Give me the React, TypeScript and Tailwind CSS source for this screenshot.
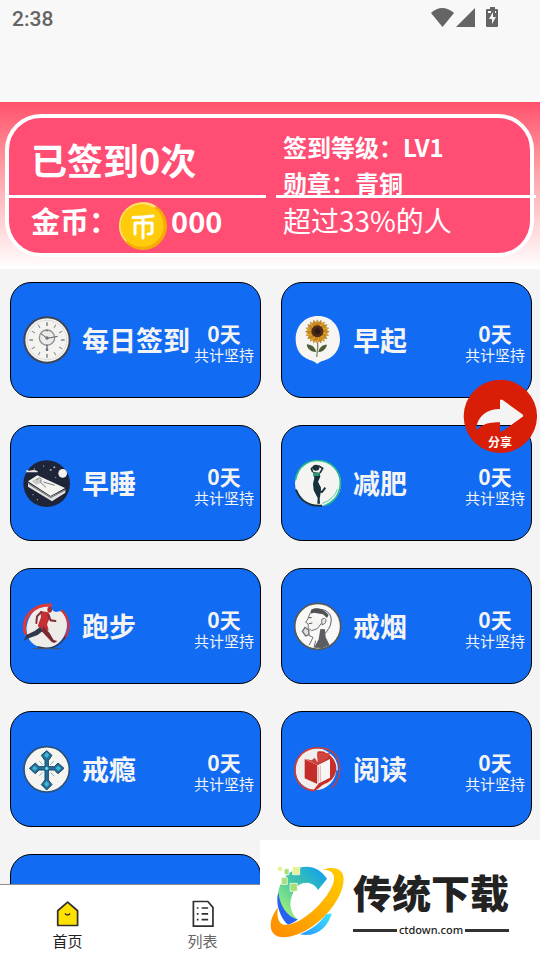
import type { ReactNode } from "react";

const ClockIcon = () => (
  <svg viewBox="68 123 144 144" className="size-12 shrink-0" aria-hidden="true">
    <circle cx="140" cy="195" r="68" fill="#f4f3f0" stroke="#3d4656" strokeWidth="6" />
    <circle cx="140" cy="195" r="59" fill="none" stroke="#cfcfcd" strokeWidth="2" />
    {[0, 30, 60, 90, 120, 150, 180, 210, 240, 270, 300, 330].map((a) => (
      <path key={a} d="M140 142v11" stroke="#8b8f96" strokeWidth={a % 90 === 0 ? 5 : 3} transform={`rotate(${a} 140 195)`} />
    ))}
    <circle cx="140" cy="188" r="23" fill="#ecebe8" stroke="#8f939a" strokeWidth="4" />
    <path d="M122 176l18 14 32-6" fill="none" stroke="#5d636e" strokeWidth="3" />
    <path d="M140 162l-4 7h8zM138 208h4v20h-4z" fill="#6a6f79" />
    <circle cx="140" cy="224" r="4" fill="#6a6f79" />
    <circle cx="140" cy="189" r="5" fill="#6a6f79" />
  </svg>
);

const petals = Array.from({ length: 20 }, (_, i) => i * 18);

const SunflowerIcon = () => (
  <svg viewBox="72 123 144 144" className="size-12 shrink-0" aria-hidden="true">
    <path d="M144 123c40 0 66 30 66 70 0 30-18 55-46 63-10 3-16 6-22 11-6-6-12-9-23-12-27-9-42-32-42-62 0-40 27-70 67-70z" fill="#f6f5f2" />
    <path d="M142 198c3 18 1 30-2 48" fill="none" stroke="#7f8b62" strokeWidth="4" />
    {petals.map((a) => (
      <path key={a} d="M142 170l-7-22 7-14 7 14z" fill={a % 36 === 0 ? "#e9a521" : "#d18a1c"} stroke="#8a5a18" strokeWidth="1" transform={`rotate(${a} 142 170)`} />
    ))}
    <circle cx="142" cy="169" r="18" fill="#4a2b1c" />
    <circle cx="142" cy="169" r="9" fill="#2f1b14" />
    <path d="M139 231c-17 0-27-9-29-23 15 1 25 8 29 23zM145 231c13 0 23-9 26-22-14 0-23 8-26 22z" fill="#4c5f35" />
  </svg>
);

const SleepIcon = () => (
  <svg viewBox="69 117 144 144" className="size-12 shrink-0" aria-hidden="true">
    <circle cx="140" cy="191" r="70" fill="#1e2538" />
    <circle cx="188" cy="160" r="13" fill="#f3f2ee" />
    <path d="M80 150q8 4 15 1t18 3v3H78z" fill="#e8e8e4" />
    <g fill="#a9acb3">
      <circle cx="152" cy="150" r="3" /><circle cx="163" cy="142" r="3" /><circle cx="131" cy="138" r="2" />
      <circle cx="103" cy="147" r="2" /><circle cx="187" cy="221" r="2" /><circle cx="99" cy="224" r="2" />
      <circle cx="167" cy="172" r="2" /><circle cx="112" cy="239" r="2" />
    </g>
    <path d="M84 188l68 42 44-22v10l-40 26-72-44z" fill="#e4e3df" />
    <path d="M84 184l28-18 83 38-43 24z" fill="#f4f3ef" />
    <path d="M95 184l16-10 13 6-4 10-10 4z" fill="#c9c9c6" />
    <path d="M110 180c4-7 11-8 14-2l-2 10 16 14M130 186l34 10" fill="none" stroke="#3a3f50" strokeWidth="2" />
    <path d="M86 192l66 41 44-23" fill="none" stroke="#2c2f3b" strokeWidth="2" />
  </svg>
);

const SlimIcon = () => (
  <svg viewBox="72 27 144 144" className="size-12 shrink-0" aria-hidden="true">
    <circle cx="144" cy="100" r="69" fill="#f4f5f3" />
    <path d="M76 91C84 45 119 26 158 33c37 8 58 43 52 78-4 28-23 48-46 56" fill="none" stroke="#25b98a" strokeWidth="5" />
    <path d="M78 119c13 35 42 51 78 48" fill="none" stroke="#17313a" strokeWidth="6" />
    <path d="M157 160c24-8 39-24 45-42" fill="none" stroke="#50c9a5" strokeWidth="3" />
    <path d="M128 66l-4-10 9-8M145 47l13 8-8 14" fill="none" stroke="#1d3038" strokeWidth="5" />
    <ellipse cx="138" cy="53" rx="10" ry="9" fill="#1d3038" />
    <path d="M128 66l21 2 2 12-7 15 9 18-1 15-3 18 1 15h-8l1-17-12-23-2-20 4-17z" fill="#17313a" />
    <path d="M129 68l19 1 1 8-19 2z" fill="#279b76" />
    <path d="M146 124l10 2 10-13" fill="none" stroke="#17313a" strokeWidth="6" />
  </svg>
);

const RunIcon = () => (
  <svg viewBox="69 126 144 144" className="size-12 shrink-0" aria-hidden="true">
    <path d="M140 138c15 2 14 16 28 18 14-4 18-2 22 3 29 42-5 104-51 105-44 0-66-35-58-70 7-33 28-55 59-56z" fill="#eeece8" />
    <path d="M77 224c-14-46 16-92 79-89" fill="none" stroke="#df3838" strokeWidth="9" />
    <path d="M184 150c26 26 29 59 7 88" fill="none" stroke="#d83235" strokeWidth="7" />
    <path d="M196 230c-16 29-48 42-83 30" fill="none" stroke="#31394a" strokeWidth="4" />
    <ellipse cx="149" cy="149" rx="7" ry="9" fill="#a72d32" />
    <path d="M121 153l24 4 6 13-10 23 5 18-13 4-20-17 10-27z" fill="#c63034" />
    <path d="M124 156l-13 13-2 20M145 165l7 16 14 2" fill="none" stroke="#7d2c38" strokeWidth="6" strokeLinecap="round" />
    <path d="M120 201l-16 12-24 11-10 20 10-7 33-12 16-13z" fill="#30384a" />
    <path d="M130 198l18 20 13 22 11 3-9 6-8-3-30-32z" fill="#7d2934" />
    <path d="M100 266h83" stroke="#4b5361" strokeWidth="3" />
  </svg>
);

const SmokeIcon = () => (
  <svg viewBox="72 126 144 144" className="size-12 shrink-0" aria-hidden="true">
    <circle cx="143" cy="199" r="69" fill="#f9f9f8" stroke="#555759" strokeWidth="5" />
    <path d="M121 158c10-17 57-14 62 15 3 23-8 34-17 47" fill="none" stroke="#55575a" strokeWidth="3" />
    <path d="M123 150c12-11 39-4 53 15l-5 9-12-11-27-5-10 3z" fill="#505255" />
    <path d="M120 160l-6 16-7 11 7 4 1 14 10 7 17-6 12-16" fill="#f5f5f3" stroke="#707274" strokeWidth="3" />
    <path d="M115 173h10M117 191l10-2" stroke="#505255" strokeWidth="3" />
    <path d="M155 178c10-7 17 1 10 12l-9 5z" fill="#e9e9e7" stroke="#6d6f71" strokeWidth="3" />
    <path d="M151 207l14 1 2 24 12 24-21 8-26-1 14-25z" fill="#5b5d60" />
    <path d="M97 214l8-12 11 8 1 14-10 4z" fill="#dededc" stroke="#6b6d70" strokeWidth="4" />
    <path d="M117 226l12 6-12 24M137 242l-5 20" fill="none" stroke="#6b6d70" strokeWidth="3" />
  </svg>
);

const CrossIcon = () => (
  <svg viewBox="69 135 144 144" className="size-12 shrink-0" aria-hidden="true">
    <circle cx="140" cy="208" r="68" fill="#f5f4f1" stroke="#2b527a" strokeWidth="5" />
    <path d="M118 184l10 10M161 184l-10 10M118 227l10-10M162 228l-10-10" stroke="#65bfd0" strokeWidth="3" />
    <path d="M140 152l16 14-11 16v18h18l11-11 18 16-18 16-11-11h-18v30l11 14-16 16-16-16 11-14v-30h-18l-11 11-18-16 18-16 11 11h18v-18l-11-16z" fill="#216f9b" stroke="#194666" strokeWidth="3" />
    <path d="M140 157l8 9-8 8-8-8zM104 197l8 8-8 8-8-8zM175 197l8 8-8 8-8-8zM140 243l8 9-8 9-8-9z" fill="#43b5d3" />
    <circle cx="140" cy="205" r="5" fill="#65d7e4" />
  </svg>
);

const BookIcon = () => (
  <svg viewBox="72 135 144 144" className="size-12 shrink-0" aria-hidden="true">
    <ellipse cx="137" cy="207" rx="62" ry="63" fill="#f1efed" />
    <path d="M142 155c29-6 54 15 57 45 1 25-13 44-34 51-16 7-20 20-36 21l16-20z" fill="#c82e2b" />
    <path d="M135 272c-34 0-60-25-60-62 0-39 30-69 73-66" fill="none" stroke="#d33b35" strokeWidth="5" />
    <path d="M148 144c30 0 50 16 58 40 9 28 0 60-20 79" fill="none" stroke="#d33b35" strokeWidth="4" />
    <path d="M165 155c26 12 38 32 36 56" fill="none" stroke="#f1efed" strokeWidth="4" />
    <path d="M142 158c-3 16 6 18 1 30l29-12 9-16z" fill="#d2443e" />
    <path d="M104 177l38 19v56l-38-17z" fill="#c52d2b" />
    <path d="M142 196l38-19v56l-38 19z" fill="#f7f6f4" />
    <path d="M107 177l18 4 9-8 8 13 17-10 10 4-27 16z" fill="#c9423c" />
    <path d="M145 199v49M151 196v49" stroke="#d98a85" strokeWidth="2" />
  </svg>
);

const habits: { name: string; icon: ReactNode }[] = [
  { name: "每日签到", icon: <ClockIcon /> },
  { name: "早起", icon: <SunflowerIcon /> },
  { name: "早睡", icon: <SleepIcon /> },
  { name: "减肥", icon: <SlimIcon /> },
  { name: "跑步", icon: <RunIcon /> },
  { name: "戒烟", icon: <SmokeIcon /> },
  { name: "戒瘾", icon: <CrossIcon /> },
  { name: "阅读", icon: <BookIcon /> },
];

function HabitCard({ name, icon }: { name: string; icon: ReactNode }) {
  return (
    <button type="button" className="flex h-[116px] items-center rounded-[21px] border border-black bg-[#116bf3] pl-3 pr-[6px] text-left text-[#f4f4f4]">
      {icon}
      <span className="ml-[11px] flex-1 whitespace-nowrap text-[27px] font-bold leading-9">{name}</span>
      <span className="flex flex-col items-center pt-2 leading-[22px]">
        <span className="text-[21px] font-bold">0天</span>
        <span className="text-[15px]">共计坚持</span>
      </span>
    </button>
  );
}

function StatusBar() {
  return (
    <header className="flex h-[102px] shrink-0 items-start justify-between bg-[#f8f8f8] pl-3 pr-[41px] pt-[7px] text-[#646464]">
      <span className="font-[Roboto,sans-serif] text-[21px] font-medium leading-6">2:38</span>
      <svg viewBox="0 0 68 22" className="h-[22px] w-[68px]" fill="currentColor" aria-hidden="true">
        <path d="M0 6Q11-4 23 6L11.500 20z" />
        <path d="M44 1v19H25z" />
        <path fillRule="evenodd" d="M59 0h5v2h2q1 0 1 1v16q0 1-1 1H56q-1 0-1-1V3q0-1 1-1h3zM62 5l-4 7h3v5l4-7h-3zM57 4v2h3V4zM64 4v2h1V4z" />
      </svg>
    </header>
  );
}

function Coin() {
  return (
    <svg viewBox="0 0 50 50" className="mt-[3px] size-[50px] shrink-0" aria-hidden="true">
      <circle cx="25" cy="25" r="24" fill="#f7ac05" />
      <path d="M1 25A24 24 0 0 1 38 5L8 41Q1 34 1 25z" fill="#ffe083" />
      <circle cx="24" cy="24.500" r="21.500" fill="#ffcc0c" />
      <path d="M15 16.500q10 0 20-1.500M17 33V22h17v9q0 2-4 2M25 17v20" fill="none" stroke="#fff" strokeWidth="3" strokeLinecap="round" strokeLinejoin="round" />
    </svg>
  );
}

function Summary() {
  return (
    <section className="shrink-0 bg-linear-to-b from-[#ff4f6c] to-white pb-3 pl-[5px] pr-[6px] pt-3">
      <div className="grid h-[143px] grid-cols-[257fr_254fr] gap-x-[10px] rounded-[36px] border-4 border-white bg-[#ff4d74] font-bold text-white">
        <div>
          <div className="flex h-20 items-center border-b-[3px] border-white pl-[22px] pt-1">
            <h1 className="text-[36px] leading-none">已签到0次</h1>
          </div>
          <div className="flex pl-[22px] text-[29px] leading-[44px]">
            <span>金币：</span>
            <Coin />
            <span className="ml-[3px]">000</span>
          </div>
        </div>
        <div className="-mr-[6px]">
          <div className="h-20 border-b-[3px] border-white pl-[7px] pt-[11px] text-[24px] leading-9">
            <p>签到等级：LV1</p>
            <p>勋章：青铜</p>
          </div>
          <p className="pl-[7px] text-[28px] font-normal leading-[44px]">超过33%的人</p>
        </div>
      </div>
    </section>
  );
}

function ShareButton() {
  return (
    <button type="button" className="absolute right-[3px] top-[379px] size-[74px] text-[12px] font-bold text-white">
      <svg viewBox="579 312 222 222" className="absolute inset-0 size-full" aria-hidden="true">
        <path
          fill="#d81e06"
          fillRule="evenodd"
          d="M691 314a110 110 0 1 0 0 220a110 110 0 1 0 0-220zM690 379q0-9 8-4l59 43q5 4 0 8l-59 42q-8 5-8-3v-23q-42-3-66 19-6 6-6-1c6-37 33-58 72-58z"
        />
      </svg>
      <span className="relative block pt-[52px] leading-[22px]">分享</span>
    </button>
  );
}

function TabBar() {
  return (
    <nav className="grid h-[76px] shrink-0 grid-cols-4 border-t border-[#8c8c8c] bg-white text-[15px] leading-5">
      <a href="#home" className="flex flex-col items-center gap-[3px] pt-[15px] text-[#222]">
        <svg viewBox="160 203 70 81" className="h-7 w-6" aria-hidden="true">
          <path d="M194 209l29 25v43h-58v-43z" fill="#ffe100" stroke="#303030" strokeWidth="5" strokeLinejoin="round" />
          <path d="M186 242q8 9 15 0" fill="none" stroke="#303030" strokeWidth="4" />
        </svg>
        首页
      </a>
      <a href="#list" className="flex flex-col items-center gap-[3px] pt-[15px] text-[#666]">
        <svg viewBox="550 203 70 81" className="h-7 w-6" fill="none" stroke="#303030" strokeWidth="5" aria-hidden="true">
          <path d="M557 207h42l15 17v55h-57zM567 226h5M567 243h5M567 260h5M581 226h19M581 243h19M581 260h19" />
        </svg>
        列表
      </a>
    </nav>
  );
}

function SiteLogo() {
  return (
    <svg viewBox="780 100 220 220" className="size-[76px] shrink-0" aria-hidden="true">
      <defs>
        <linearGradient id="arc" x1="0" y1="1" x2="1" y2="0">
          <stop offset="0.2" stopColor="#8de980" />
          <stop offset="0.5" stopColor="#43c6a5" />
          <stop offset="1" stopColor="#079bfa" />
        </linearGradient>
        <linearGradient id="ring" x1="0" y1="1" x2="1" y2="0">
          <stop offset="0" stopColor="#ff8b00" />
          <stop offset="1" stopColor="#ffcf00" />
        </linearGradient>
        <linearGradient id="wave" x1="0" y1="1" x2="1" y2="0">
          <stop offset="0" stopColor="#2997ff" />
          <stop offset="1" stopColor="#3be4ff" />
        </linearGradient>
      </defs>
      <path d="M948 143l-26 32c-17-29-55-27-70 3-17 33-12 62 12 84-35-3-58-31-58-67 0-48 39-87 83-87 24 0 43 12 59 35z" fill="url(#arc)" />
      <path d="M807 181c5 42 25 70 56 80-9 7-17 12-28 15-22-20-38-60-28-95z" fill="#2862f2" />
      <path d="M935 116c31-10 60-5 61 26 0 49-42 105-91 139-43 30-96 43-114 18-13-19-4-50 15-73-5 28 3 52 24 50 38-2 91-47 119-88 29-42 26-70-14-72z" fill="url(#ring)" />
      <path d="M869 303c33-11 61-34 77-58l16-2c-14 46-50 70-93 60z" fill="url(#wave)" />
      <g stroke="#fff" strokeWidth="2">
        <path d="M848 108h21v23h-21zM805 107h13v14h-13z" fill="#e6f38f" />
        <path d="M824 114h14v17h-14zM816 139h17v20h-17zM841 156h21v23h-21z" fill="#a6df75" />
      </g>
    </svg>
  );
}

function SiteBadge() {
  return (
    <aside className="absolute bottom-0 right-0 flex h-[120px] w-[280px] items-start bg-white pl-[9px] pt-6 text-[#222]">
      <SiteLogo />
      <div className="ml-2 w-[156px]">
        <div className="whitespace-nowrap text-[39px] font-black leading-[54px]">传统下载</div>
        <div className="flex items-center gap-[2px] font-['Noto_Sans',sans-serif] text-[11px] font-medium leading-6">
          <span className="h-[3px] flex-1 bg-[#333]" />
          ctdown.com
          <span className="h-[3px] flex-1 bg-[#333]" />
        </div>
      </div>
    </aside>
  );
}

export default function App() {
  return (
    <div className="relative flex h-screen flex-col overflow-hidden bg-[#f4f4f4] font-['Noto_Sans_CJK_SC',sans-serif]">
      <StatusBar />
      <Summary />
      <main className="min-h-0 flex-1 overflow-y-auto [scrollbar-width:none]">
        <div className="grid grid-cols-2 gap-x-5 gap-y-[27px] pl-[10px] pr-2 pt-[13px]">
          {habits.map((habit) => (
            <HabitCard key={habit.name} name={habit.name} icon={habit.icon} />
          ))}
          <div className="h-[116px] rounded-[21px] border border-black bg-[#116bf3]" />
        </div>
      </main>
      <TabBar />
      <ShareButton />
      <SiteBadge />
    </div>
  );
}
